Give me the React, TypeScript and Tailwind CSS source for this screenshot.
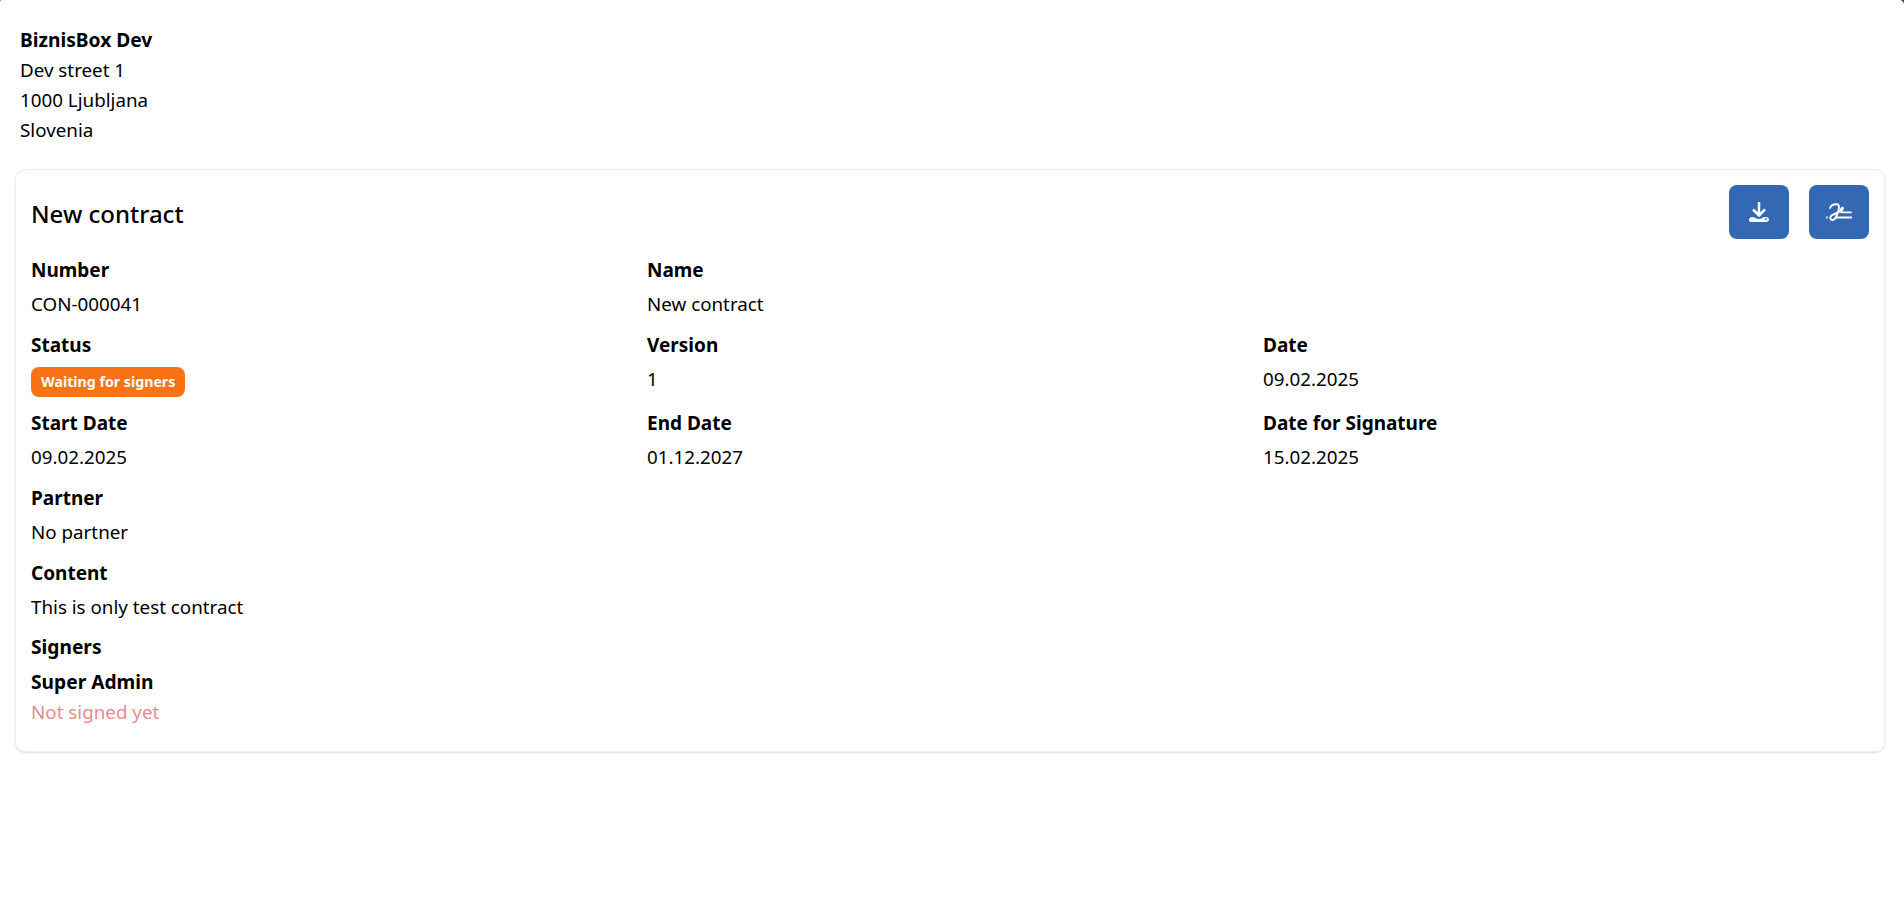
const Field = ({ label, value }: { label: string; value: string }) => (
  <div>
    <div className="font-bold text-[19px] h-[30px] leading-[32px] mb-[5px]">{label}</div>
    <div className="h-[30px] leading-[30px]">{value}</div>
  </div>
);

const DownloadIcon = () => (
  <svg width="20" height="20" viewBox="0 0 20 20">
    <path d="M10 0v13M4 7.500l6 6 6-6" fill="none" stroke="white" strokeWidth="2.500" />
    <path d="M0 18c0-2 1.500-3 3.500-3 2 0 4 2 6.500 2 2.500 0 3.500-2 6.500-2 2 0 3.500 1.200 3.500 2.500S18.500 20 17 20H2.500C1 20 0 19.500 0 18z" fill="white" />
    <circle cx="16.800" cy="17.200" r="1" fill="#3568b3" />
  </svg>
);

const SignIcon = () => (
  <svg width="26" height="19" viewBox="0 0 26 19" fill="none" stroke="white" strokeWidth="1.900" strokeLinecap="round" strokeLinejoin="round">
    <path d="M4 5C5 2.500 8 1 11 1.300c2.500.3 2.300 3.500 1 7.700-1.200 4-2.800 8-5.500 8-2.200 0-3-2.500-1-4.500C8.500 10.500 12 10 15 8c1.500-1 2.500-2 2-3-.6-1-2.500 1-2.500 3 0 1.200.8 1.400 2.500 1.400h8" />
    <path d="M10 14.500h15.500" />
    <circle cx="0.800" cy="14.500" r="0.300" fill="white" />
  </svg>
);

export default function App() {
  return (
    <div className="relative min-h-[909px] bg-white text-black text-[18.8px] leading-[30px] font-['Noto_Sans',sans-serif] px-[15px] pt-[25px]">
      <svg className="absolute top-0 right-0" width="5" height="5" viewBox="0 0 5 5">
        <path d="M0 0h5v5C5 2 3 0 0 0z" fill="#17586b" />
      </svg>
      <svg className="absolute top-0 left-0" width="2" height="2" viewBox="0 0 2 2">
        <path d="M0 0h2C1 0 0 1 0 2z" fill="#8a8a8a" />
      </svg>
      <div className="pl-[5px] mb-[24px]">
        <div className="font-bold text-[19.2px]">BiznisBox Dev</div>
        <div>Dev street 1</div>
        <div>1000 Ljubljana</div>
        <div>Slovenia</div>
      </div>
      <div className="border border-[#eeeeee] rounded-[10px] shadow-[0_1px_2px_rgba(0,0,0,0.15)] px-[15px] pt-[15px] pb-[24px] w-[1870px]">
        <div className="flex items-center justify-between h-[54px] mb-[15px]">
          <div className="text-[24px] font-medium pt-[3px]">New contract</div>
          <div className="flex gap-5">
            <button className="w-[60px] h-[54px] rounded-lg bg-[#3568b3] flex items-center justify-center">
              <DownloadIcon />
            </button>
            <button className="w-[60px] h-[54px] rounded-lg bg-[#3568b3] flex items-center justify-center">
              <SignIcon />
            </button>
          </div>
        </div>
        <div className="grid grid-cols-[616px_616px_1fr] gap-y-[10px]">
          <Field label="Number" value="CON-000041" />
          <div className="col-span-2">
            <Field label="Name" value="New contract" />
          </div>
          <div>
            <div className="font-bold text-[19px] h-[30px] leading-[32px] mb-[6px]">Status</div>
            <span className="inline-flex items-center h-[30px] px-[10px] rounded-lg bg-[#f97316] text-white text-[14.2px] font-bold">
              Waiting for signers
            </span>
          </div>
          <Field label="Version" value="1" />
          <Field label="Date" value="09.02.2025" />
          <Field label="Start Date" value="09.02.2025" />
          <Field label="End Date" value="01.12.2027" />
          <Field label="Date for Signature" value="15.02.2025" />
          <div className="col-span-3">
            <Field label="Partner" value="No partner" />
          </div>
          <div className="col-span-3">
            <Field label="Content" value="This is only test contract" />
          </div>
        </div>
        <div className="font-bold text-[19.2px] mt-[10px] mb-[5px]">Signers</div>
        <div className="font-bold text-[19.2px]">Super Admin</div>
        <div className="text-[#e88b8f]">Not signed yet</div>
      </div>
    </div>
  );
}
